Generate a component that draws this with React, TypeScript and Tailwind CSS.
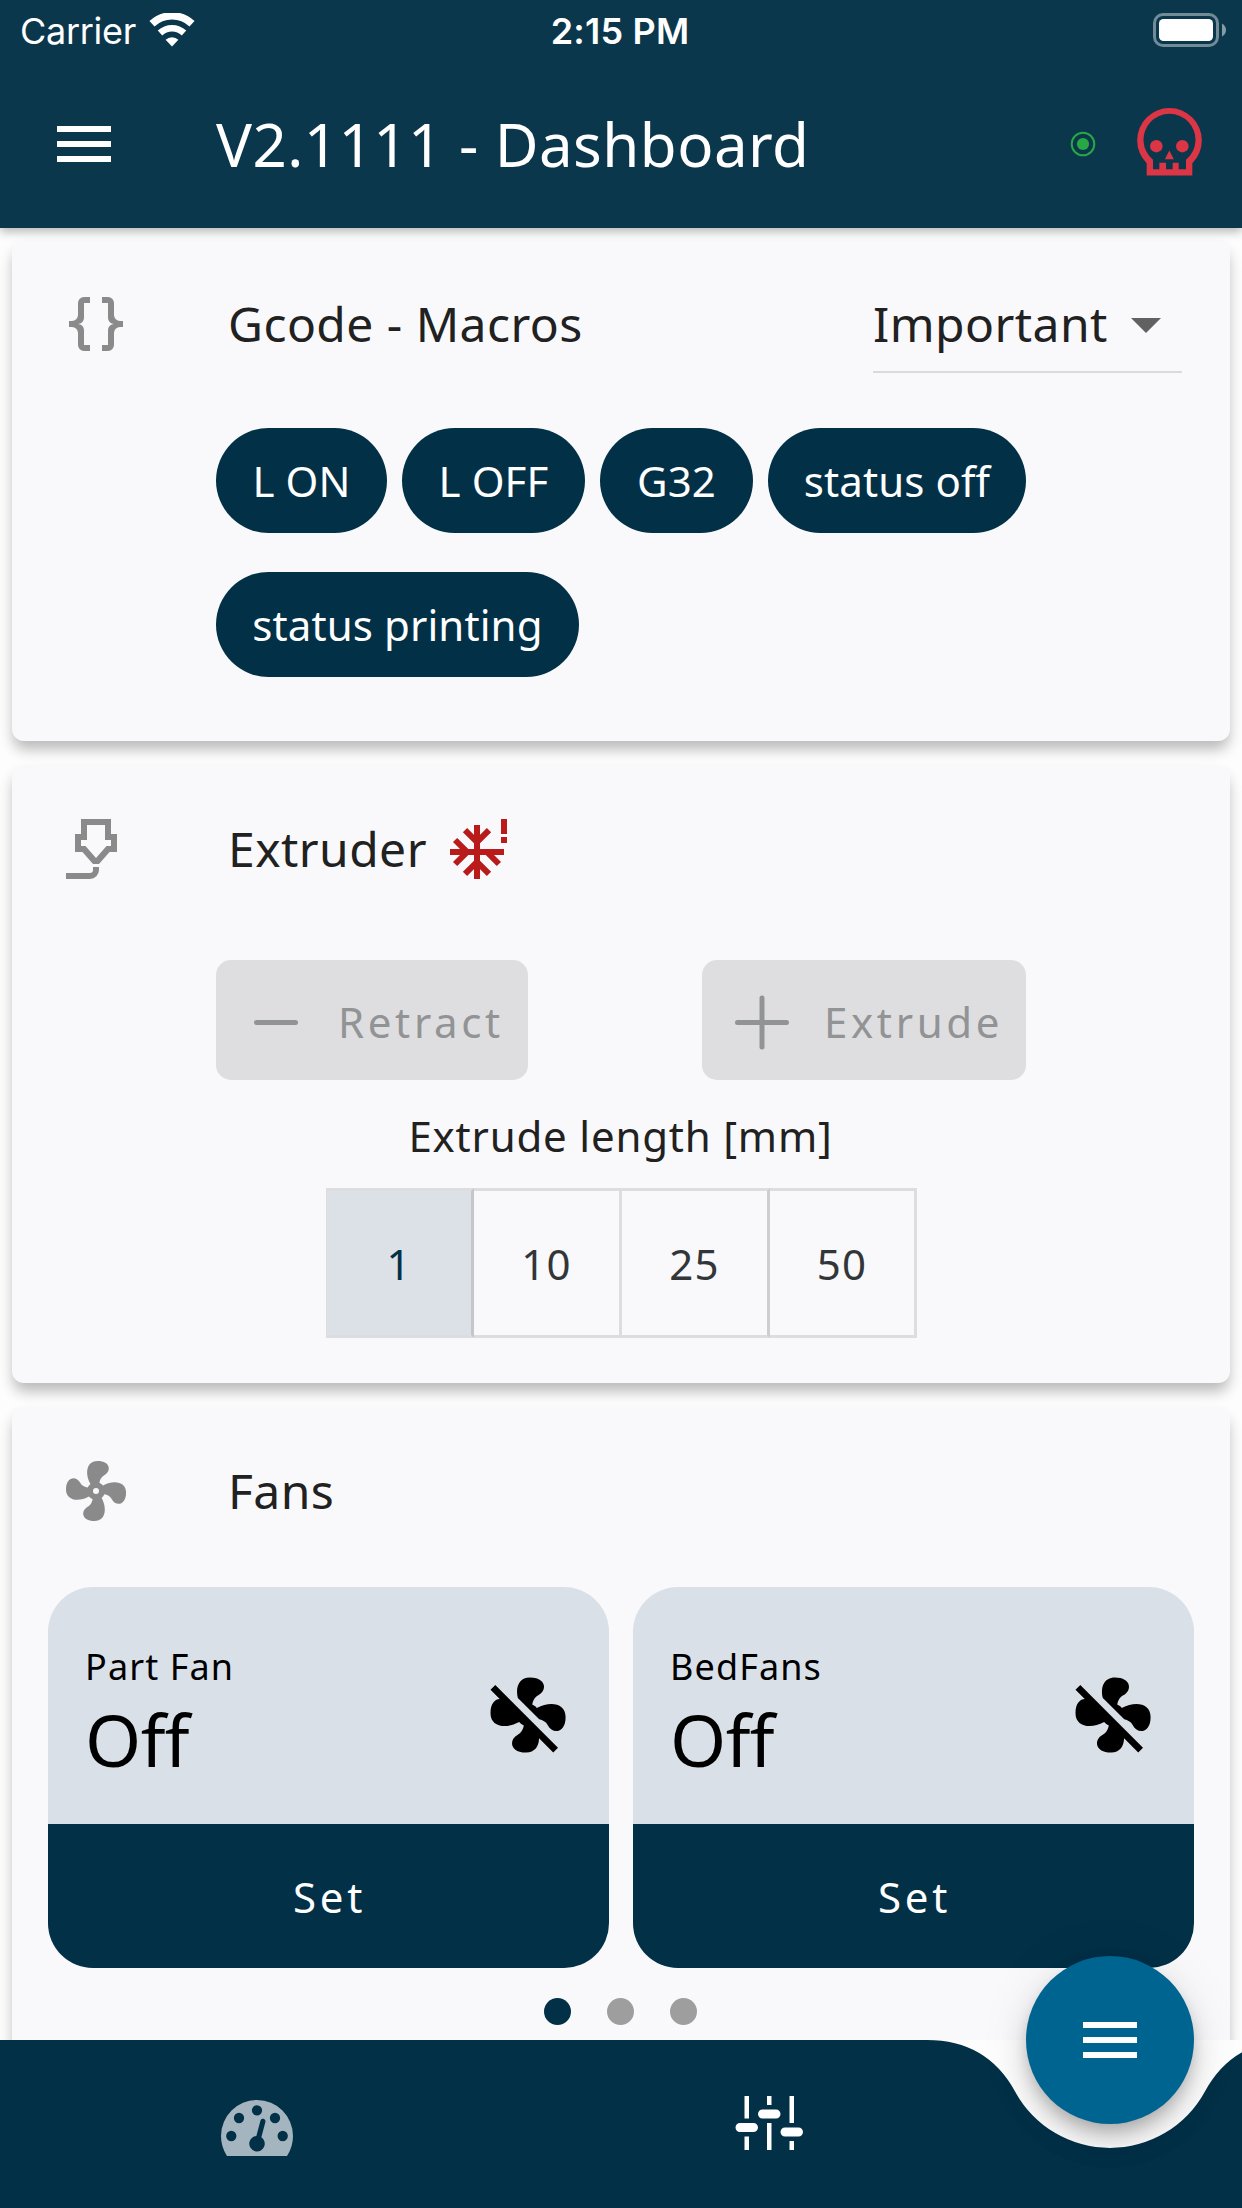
import React from "react";

const FAN =
  "M12,11A1,1 0 0,0 11,12A1,1 0 0,0 12,13A1,1 0 0,0 13,12A1,1 0 0,0 12,11M12.5,2C17,2 17.11,5.57 14.75,6.75C13.76,7.24 13.32,8.29 13.13,9.22C13.61,9.42 14.03,9.73 14.35,10.13C18.05,8.13 22.03,8.92 22.03,12.5C22.03,17 18.46,17.1 17.28,14.73C16.78,13.74 15.72,13.3 14.79,13.11C14.59,13.59 14.28,14 13.88,14.34C15.87,18.03 15.08,22 11.5,22C7,22 6.91,18.42 9.27,17.24C10.25,16.75 10.69,15.71 10.89,14.79C10.4,14.59 9.97,14.27 9.65,13.87C5.96,15.85 2,15.07 2,11.5C2,7 5.56,6.89 6.74,9.26C7.24,10.25 8.29,10.68 9.22,10.87C9.41,10.39 9.73,9.97 10.14,9.65C8.15,5.96 8.94,2 12.5,2Z";
const FAN_OFF =
  "M12.5,2C9.64,2 8.57,4.55 9.29,7.47L15,13.16C15.87,13.37 16.81,13.81 17.28,14.73C18.46,17.1 22.03,17 22.03,12.5C22.03,8.92 18.05,8.13 14.35,10.13C14.03,9.73 13.61,9.42 13.13,9.22C13.32,8.29 13.76,7.24 14.75,6.75C17.11,5.57 17,2 12.5,2M3.28,4L2,5.27L4.47,7.73C3.22,7.74 2,8.87 2,11.5C2,15.07 5.96,15.85 9.65,13.87C9.97,14.27 10.4,14.59 10.89,14.79C10.69,15.71 10.25,16.75 9.27,17.24C6.91,18.42 7,22 11.5,22C13.8,22 14.94,20.36 14.94,18.21L18.73,22L20,20.72L3.28,4Z";
const BRACES =
  "M8,3A2,2 0 0,0 6,5V9A2,2 0 0,1 4,11H3V13H4A2,2 0 0,1 6,15V19A2,2 0 0,0 8,21H10V19H8V14A2,2 0 0,0 6,12A2,2 0 0,0 8,10V5H10V3M16,3A2,2 0 0,1 18,5V9A2,2 0 0,0 20,11H21V13H20A2,2 0 0,0 18,15V19A2,2 0 0,1 16,21H14V19H16V14A2,2 0 0,1 18,12A2,2 0 0,1 16,10V5H14V3H16Z";
const NOZZLE =
  "M7,2H17V7H19V13H16.5L13,17H11L7.5,13H5V7H7V2M9,4V9H7V11H8.5L12,15L15.5,11H17V9H15V4H9M10,22H2V20H10A1,1 0 0,0 11,19V18H13V19A3,3 0 0,1 10,22Z";
const MENU = "M3 18h18v-2H3v2zm0-5h18v-2H3v2zm0-7v2h18V6H3z";
const GAUGE =
  "M384 896q0-53-37.5-90.5T256 768t-90.5 37.5T128 896t37.5 90.5T256 1024t90.5-37.5T384 896zm192-448q0-53-37.5-90.5T448 320t-90.5 37.5T320 448t37.5 90.5T448 576t90.5-37.5T576 448zm428 481l101-382q6-26-7.5-48.5T1059 469t-48 6.5-30 39.5L880 897q-60 5-107 43.5t-63 98.5q-20 77 20 146t117 89 146-20 89-117q16-60-6-117t-72-91zm660-33q0-53-37.5-90.5T1536 768t-90.5 37.5T1408 896t37.5 90.5 90.5 37.5 90.5-37.5T1664 896zm-640-640q0-53-37.5-90.5T896 128t-90.5 37.5T768 256t37.5 90.5T896 384t90.5-37.5T1024 256zm448 192q0-53-37.5-90.5T1344 320t-90.5 37.5T1216 448t37.5 90.5T1344 576t90.5-37.5T1472 448zm320 448q0 261-141 483-19 29-54 29H195q-35 0-54-29Q0 1158 0 896q0-182 71-348t191-286T548 71 896 0t348 71 286 191 191 286 71 348z";
const SLIDERS =
  "M4 7H3V2h1v5zm-1 7h1v-3H3v3zm5 0h1V8H8v6zm5 0h1v-2h-1v2zm1-12h-1v6h1V2zM9 2H8v2h1V2zM5 8H2c-.55 0-1 .45-1 1s.45 1 1 1h3c.55 0 1-.45 1-1s-.45-1-1-1zm5-3H7c-.55 0-1 .45-1 1s.45 1 1 1h3c.55 0 1-.45 1-1s-.45-1-1-1zm5 4h-3c-.55 0-1 .45-1 1s.45 1 1 1h3c.55 0 1-.45 1-1s-.45-1-1-1z";

function Icon({ d, className }: { d: string; className: string }) {
  return (
    <svg viewBox="0 0 24 24" fill="currentColor" className={className}>
      <path d={d} />
    </svg>
  );
}

function StatusBar() {
  return (
    <div className="grid h-[60px] grid-cols-3 items-start font-['Inter',sans-serif] text-[36px] leading-[44px]">
      <div className="flex items-start pl-[20px] pt-[9px]">
        <span className="w-[129px] whitespace-nowrap tracking-[-0.3px]">Carrier</span>
        <svg viewBox="0 0 46 34" className="mt-[4px] h-[34px] w-[46px]" fill="none" stroke="currentColor">
          <path d="M3 13.2A29 29 0 0 1 43 13.2" strokeWidth="7.4" transform="translate(0 -2.4)" />
          <path d="M11 20.6A17.6 17.6 0 0 1 35 20.6" strokeWidth="6.6" transform="translate(0 -.6)" />
          <path d="M16.6 26.8A9.4 9.4 0 0 1 29.4 26.8L23 33.4Z" fill="currentColor" stroke="none" />
        </svg>
      </div>
      <div className="whitespace-nowrap pr-[2px] pt-[9px] text-center font-semibold tracking-[0.2px]">2:15 PM</div>
      <div className="flex justify-end pr-[16px] pt-[13px]">
        <svg viewBox="0 0 73 34" className="h-[34px] w-[73px]">
          <rect x="1.5" y="1.5" width="63" height="31" rx="8.5" fill="none" stroke="#fff" strokeOpacity=".42" strokeWidth="3" />
          <rect x="6" y="6" width="54" height="22" rx="4.5" fill="#fff" />
          <path d="M69 10.5Q73 13 73 17T69 23.5Z" fill="#fff" fillOpacity=".5" />
        </svg>
      </div>
    </div>
  );
}

function Header() {
  return (
    <header className="relative z-10 h-[228px] shrink-0 bg-[#0b374c] text-white shadow-[0_4px_9px_0_rgba(0,0,0,0.27)]">
      <StatusBar />
      <div className="flex h-[168px] items-center pl-[48px] pr-[40px]">
        <Icon d={MENU} className="size-[72px]" />
        <h1 className="ml-[96px] flex-1 whitespace-nowrap text-[60px] leading-[82px] tracking-[0.45px]">
          V2.1111 - Dashboard
        </h1>
        <svg viewBox="0 0 26 26" className="mr-[41px] size-[26px]">
          <circle cx="13" cy="13" r="11.3" fill="none" stroke="#28a745" strokeWidth="2" />
          <circle cx="13" cy="13" r="6.1" fill="#28a745" />
        </svg>
        <svg viewBox="3 4 195 206" className="mb-[5px] h-[69px] w-[65px]" fill="#dc3545">
          <path
            fillRule="evenodd"
            d="M32 172A97 97 0 1 1 169 172V209H32ZM51 162V190H70V171H90V190H110V171H128V190H150V162A78 78 0 1 0 51 162Z"
          />
          <circle cx="61" cy="121" r="18.7" />
          <circle cx="139" cy="121" r="18.7" />
          <path d="M100 134L113.500 160H86.500Z" />
        </svg>
      </div>
    </header>
  );
}

function Card({ className, children }: { className: string; children: React.ReactNode }) {
  return (
    <section
      className={
        "mx-[12px] shrink-0 rounded-[12px] bg-[#f9f9fb] shadow-[0_10px_14px_-2px_rgba(0,0,0,0.22),0_8px_16px_0_rgba(0,0,0,0.07)] " +
        className
      }
    >
      {children}
    </section>
  );
}

function CardTitle({ icon, title, children }: { icon: string; title: string; children?: React.ReactNode }) {
  return (
    <div className="flex h-[168px] items-center pl-[48px] pr-[48px]">
      <Icon d={icon} className="size-[72px] text-[#8a8a8a]" />
      <h2 className="ml-[96px] whitespace-nowrap text-[48px] leading-[66px] tracking-[0.45px]">{title}</h2>
      {children}
    </div>
  );
}

function Snowflake() {
  return (
    <svg viewBox="0 0 24 24" className="ml-[17px] size-[72px]" fill="none" stroke="#b91a1a" strokeWidth="2">
      <path d="M11 4V22M2 13H20" />
      <path d="M7 5.700L11 9.700L15 5.700M7 20.300L11 16.300L15 20.300M3.700 9L7.700 13L3.700 17M14.300 13L18.300 17" />
      <path d="M20 2V7M20 8V10" />
    </svg>
  );
}

function Chip({ label, className }: { label: string; className: string }) {
  return (
    <button
      className={
        "flex h-[105px] items-center justify-center whitespace-nowrap rounded-full bg-[#023047] text-[42px] tracking-[0.1px] text-white " +
        className
      }
    >
      {label}
    </button>
  );
}

function FanCard({ name }: { name: string }) {
  return (
    <div className="flex h-[381px] w-[561px] flex-col overflow-hidden rounded-[45px] bg-[#d9e0e8] text-black">
      <div className="flex h-[237px] items-center justify-between pl-[37px] pr-[36px]">
        <div className="mt-[18px]">
          <div className="whitespace-nowrap text-[36px] leading-[49px] tracking-[1.1px]">{name}</div>
          <div className="text-[72px] leading-[96px] tracking-[-0.6px]">Off</div>
        </div>
        <Icon d={FAN_OFF} className="mt-[18px] size-[90px]" />
      </div>
      <button className="flex-1 bg-[#023047] pl-[2px] pt-[1px] text-[42px] tracking-[3.75px] text-white">Set</button>
    </div>
  );
}

const cell = "flex h-[150px] items-center justify-center border-[#dddde0] border-y-[3px] ";

export default function App() {
  return (
    <div className="relative flex h-[2208px] w-[1242px] flex-col overflow-hidden bg-[#fdfdfe] font-['Noto_Sans',sans-serif] text-[#212121]">
      <Header />
      <main className="flex h-[1812px] shrink-0 flex-col gap-[24px] overflow-hidden pt-[12px]">
        <Card className="h-[501px]">
          <CardTitle icon={BRACES} title="Gcode - Macros">
            <div className="ml-auto flex h-[98px] w-[309px] items-center border-b-[2px] border-[#d9dadc]">
              <span className="mt-[2px] whitespace-nowrap text-[48px] leading-[66px] tracking-[0.45px]">Important</span>
              <Icon d="M7 10l5 5 5-5z" className="ml-[2px] mt-[2px] size-[72px] text-[#616161]" />
            </div>
          </CardTitle>
          <div className="ml-[204px] mt-[19.5px] flex w-[850px] flex-wrap gap-x-[15px] gap-y-[39px]">
            <Chip label="L ON" className="w-[171px]" />
            <Chip label="L OFF" className="w-[183px]" />
            <Chip label="G32" className="w-[153px]" />
            <Chip label="status off" className="w-[258px]" />
            <Chip label="status printing" className="w-[363px]" />
          </div>
        </Card>

        <Card className="h-[618px]">
          <CardTitle icon={NOZZLE} title="Extruder">
            <Snowflake />
          </CardTitle>
          <div className="ml-[204px] mt-[27px] flex w-[810px] justify-between text-[42px] tracking-[3.65px] text-[#929395]">
            <button className="flex h-[120px] w-[312px] items-center rounded-[15px] bg-[#dedee0]">
              <svg viewBox="0 0 72 72" className="ml-[24px] size-[72px]" stroke="currentColor" strokeWidth="5" strokeLinecap="round">
                <path d="M16.500 38.500H55.500" />
              </svg>
              <span className="ml-[26px] mt-[2px]">Retract</span>
            </button>
            <button className="flex h-[120px] w-[324px] items-center rounded-[15px] bg-[#dedee0]">
              <svg viewBox="0 0 72 72" className="ml-[24px] size-[72px]" stroke="currentColor" strokeWidth="5" strokeLinecap="round">
                <path d="M11.500 38.500H60.500M36 14V63" />
              </svg>
              <span className="ml-[26px] mt-[2px]">Extrude</span>
            </button>
          </div>
          <p className="mt-[27px] pr-[1px] text-center text-[42px] leading-[58px] tracking-[0.8px]">Extrude length [mm]</p>
          <div className="ml-[314px] mt-[23px] grid w-[591px] grid-cols-[148px_148px_148px_147px] text-[42px] tracking-[1.2px] text-[#333638]">
            <div className={cell + "border-l border-r-[3px] border-r-[#c4c6c9] bg-[#dce1e8] text-[#023047]"}>1</div>
            <div className={cell + "border-r-[3px]"}>10</div>
            <div className={cell + "border-r-[3px] border-r-[#cdced1]"}>25</div>
            <div className={cell + "border-r-[3px]"}>50</div>
          </div>
        </Card>

        <Card className="h-[720px]">
          <CardTitle icon={FAN} title="Fans" />
          <div className="mx-[36px] mt-[12px] flex justify-between">
            <FanCard name="Part Fan" />
            <FanCard name="BedFans" />
          </div>
          <div className="mt-[30px] flex justify-center gap-[36px] pr-[1px]">
            <span className="size-[27px] rounded-full bg-[#023047]" />
            <span className="size-[27px] rounded-full bg-[#9e9e9e]" />
            <span className="size-[27px] rounded-full bg-[#9e9e9e]" />
          </div>
        </Card>
      </main>

      <nav className="relative flex h-[168px] shrink-0 items-start text-white">
        <svg viewBox="0 0 1242 168" className="absolute inset-0 h-[168px] w-[1242px]">
          <path fill="#023047" d="M0 0H927Q987 0 1015.200 51.700A108 108 0 0 0 1204.800 51.700Q1233 0 1293 0V168H0Z" />
        </svg>
        <svg viewBox="0 0 1792 1408" className="relative ml-[221px] mt-[59.500px] h-[56.570px] w-[72px] text-[#a5b5bf]" fill="currentColor">
          <path d={GAUGE} />
        </svg>
        <svg viewBox="0 0 16 16" className="relative ml-[437.500px] mt-[47px] size-[72px]" fill="currentColor">
          <path d={SLIDERS} />
        </svg>
        <button className="absolute left-[1026px] top-[-84px] flex size-[168px] items-center justify-center rounded-full bg-[#006491] shadow-[0_9px_15px_-3px_rgba(0,0,0,0.2),0_18px_30px_0_rgba(0,0,0,0.14),0_3px_54px_0_rgba(0,0,0,0.08)]">
          <Icon d={MENU} className="size-[72px]" />
        </button>
      </nav>
    </div>
  );
}
